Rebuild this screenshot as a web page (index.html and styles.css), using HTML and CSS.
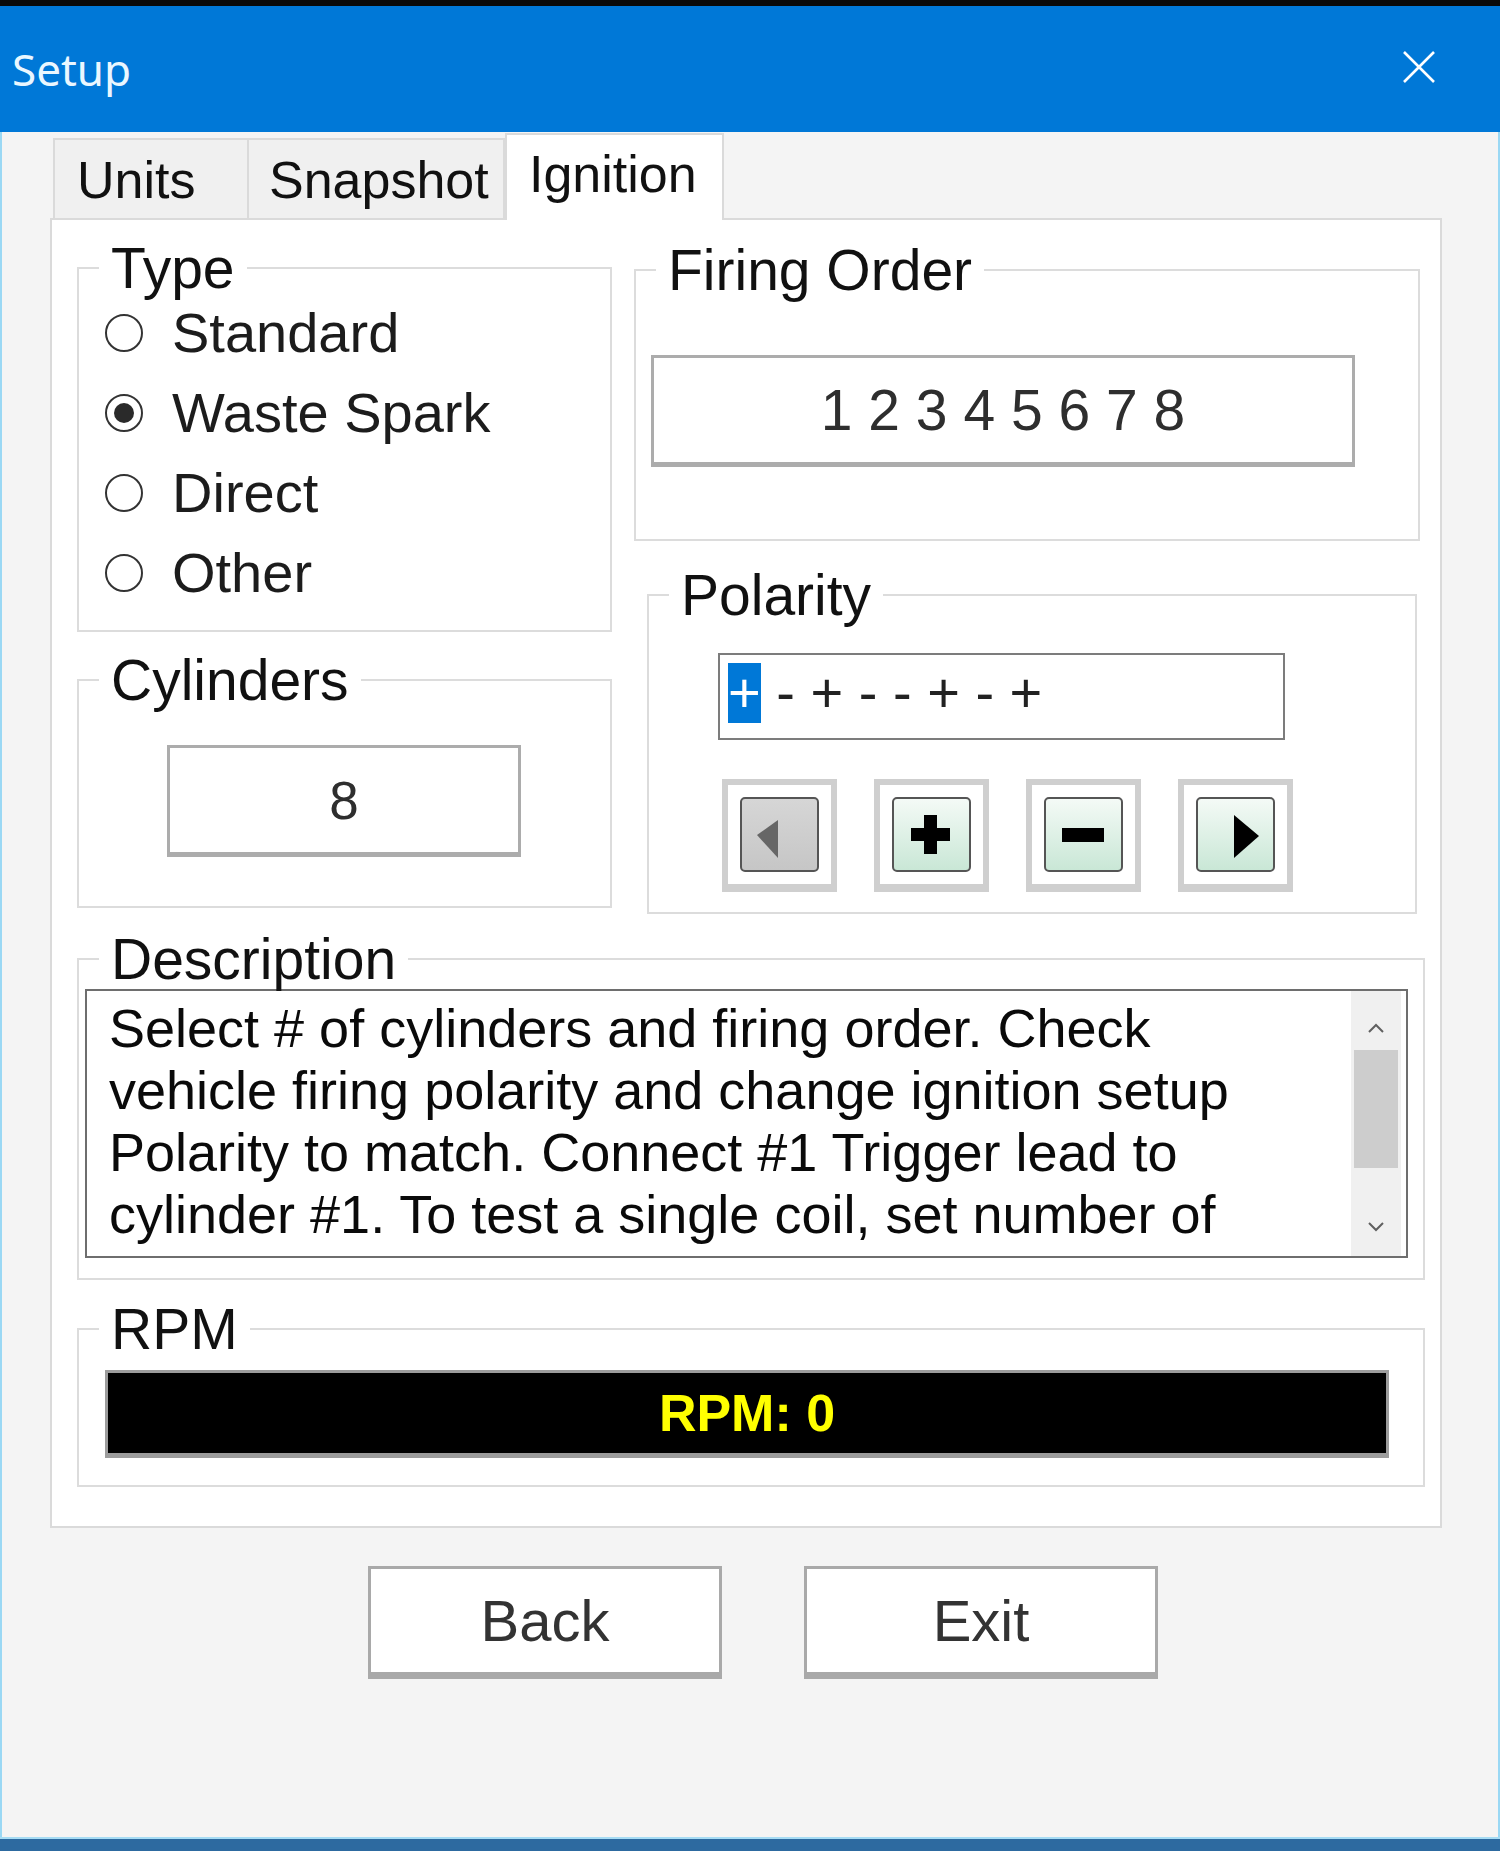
FILE: index.html
```html
<!DOCTYPE html>
<html lang="en">
<head>
    <meta charset="UTF-8">
    <meta name="viewport" content="width=device-width, initial-scale=1.0">
    <title>Setup</title>
    <link rel="stylesheet" href="styles.css">
</head>
<body>
    <div class="window">
        <div class="topstrip"></div>
        <header class="titlebar">
            <span class="title">Setup</span>
            <svg class="close" width="34" height="34" viewBox="0 0 34 34">
                <path d="M2 2 L32 32 M32 2 L2 32" stroke="#ffffff" stroke-width="2.6" fill="none"/>
            </svg>
        </header>

        <div class="body">
            <nav class="tabs">
                <div class="tab tab-units">Units</div>
                <div class="tab tab-snapshot">Snapshot</div>
                <div class="tab tab-ignition active">Ignition</div>
            </nav>

            <div class="panel">
                <div class="upper">
                    <div class="col-left">
                        <fieldset class="group type-group">
                            <legend>Type</legend>
                            <div class="radios">
                                <label class="radio"><span class="circle"></span>Standard</label>
                                <label class="radio checked"><span class="circle"></span>Waste Spark</label>
                                <label class="radio"><span class="circle"></span>Direct</label>
                                <label class="radio"><span class="circle"></span>Other</label>
                            </div>
                        </fieldset>
                        <fieldset class="group cyl-group">
                            <legend>Cylinders</legend>
                            <div class="field cyl-field">8</div>
                        </fieldset>
                    </div>

                    <div class="col-right">
                        <fieldset class="group firing-group">
                            <legend>Firing Order</legend>
                            <div class="field firing-field">1 2 3 4 5 6 7 8</div>
                        </fieldset>
                        <fieldset class="group polarity-group">
                            <legend>Polarity</legend>
                            <div class="polarity-input"><span class="sel">+</span> - + - - + - +</div>
                            <div class="pol-buttons">
                                <div class="pbtn">
                                    <div class="pbtn-face disabled">
                                        <svg width="74" height="71" viewBox="0 0 74 71">
                                            <polygon points="15,36 36,21 36,59" fill="#666666"/>
                                        </svg>
                                    </div>
                                </div>
                                <div class="pbtn">
                                    <div class="pbtn-face">
                                        <svg width="74" height="71" viewBox="0 0 74 71">
                                            <path d="M30 16 H43 V29 H56 V42 H43 V55 H30 V42 H17 V29 H30 Z" fill="#000000"/>
                                        </svg>
                                    </div>
                                </div>
                                <div class="pbtn">
                                    <div class="pbtn-face">
                                        <svg width="74" height="71" viewBox="0 0 74 71">
                                            <rect x="16" y="29" width="42" height="14" fill="#000000"/>
                                        </svg>
                                    </div>
                                </div>
                                <div class="pbtn">
                                    <div class="pbtn-face">
                                        <svg width="74" height="71" viewBox="0 0 74 71">
                                            <polygon points="36,16 61,37 36,59" fill="#000000"/>
                                        </svg>
                                    </div>
                                </div>
                            </div>
                        </fieldset>
                    </div>
                </div>

                <fieldset class="group desc-group">
                    <legend>Description</legend>
                    <div class="desc-box">
                        <p class="desc-text">Select # of cylinders and firing order. Check vehicle firing polarity and change ignition setup Polarity to match. Connect #1 Trigger lead to cylinder #1. To test a single coil, set number of</p>
                        <div class="scrollbar">
                            <div class="sb-up">
                                <svg width="18" height="10" viewBox="0 0 18 10">
                                    <polyline points="2,9 9,2 16,9" fill="none" stroke="#606060" stroke-width="2"/>
                                </svg>
                            </div>
                            <div class="sb-thumb"></div>
                            <div class="sb-track"></div>
                            <div class="sb-down">
                                <svg width="18" height="10" viewBox="0 0 18 10">
                                    <polyline points="2,1 9,8 16,1" fill="none" stroke="#606060" stroke-width="2"/>
                                </svg>
                            </div>
                        </div>
                    </div>
                </fieldset>

                <fieldset class="group rpm-group">
                    <legend>RPM</legend>
                    <div class="rpm-bar">RPM: 0</div>
                </fieldset>
            </div>

            <div class="actions">
                <button class="btn">Back</button>
                <button class="btn">Exit</button>
            </div>
        </div>

        <div class="taskbar"></div>
    </div>
</body>
</html>
```

FILE: styles.css
```css
body {
    margin: 0;
    font-family: "Liberation Sans", Arial, sans-serif;
    color: #111;
}

.window {
    width: 1500px;
    height: 1851px;
    display: flex;
    flex-direction: column;
    background-color: #f4f4f4;
}

.topstrip {
    height: 6px;
    background-color: #0a0a0a;
}

.titlebar {
    height: 126px;
    background-color: #0078d7;
    display: flex;
    align-items: center;
    justify-content: space-between;
    padding: 0 64px 0 12px;
}

.title {
    font-family: "Noto Sans", "Open Sans", sans-serif;
    font-size: 44px;
    color: #eaf7ff;
}

.close {
    margin-top: -4px;
}

.body {
    flex: 1;
    border-left: 2px solid #9ad8f4;
    border-right: 2px solid #9ad8f4;
}

/* tabs */
.tabs {
    height: 86px;
    display: flex;
    align-items: flex-end;
    margin-left: 51px;
}

.tab {
    box-sizing: border-box;
    height: 80px;
    font-size: 52px;
    line-height: 60px;
    padding-top: 10px;
    background-color: #f0f0f0;
    border: 2px solid #dadada;
    border-bottom: 0;
}

.tab-units {
    width: 196px;
    padding-left: 22px;
}

.tab-snapshot {
    width: 256px;
    padding-left: 20px;
    border-left: 0;
}

.tab-ignition {
    width: 219px;
    padding-left: 22px;
}

.tab.active {
    height: 87px;
    padding-top: 9px;
    margin-bottom: -2px;
    background-color: #fff;
    position: relative;
    z-index: 1;
}

/* panel */
.panel {
    box-sizing: border-box;
    width: 1392px;
    height: 1310px;
    margin-left: 48px;
    padding: 16px 15px 0 25px;
    background-color: #fff;
    border: 2px solid #dadada;
}

.upper {
    display: grid;
    grid-template-columns: 535px 786px;
    column-gap: 22px;
}

.col-left {
    display: flex;
    flex-direction: column;
    gap: 16px;
}

.group {
    box-sizing: border-box;
    margin: 0;
    padding: 0;
    min-width: 0;
    border: 2px solid #dcdcdc;
}

.group legend {
    font-size: 57px;
    line-height: 64px;
    padding: 0 12px;
    margin-left: 20px;
    color: #111;
}

/* type */
.type-group {
    height: 396px;
}

.radios {
    display: flex;
    flex-direction: column;
    gap: 14px;
    padding-left: 26px;
}

.radio {
    height: 66px;
    display: flex;
    align-items: center;
    font-size: 56px;
    line-height: 66px;
    color: #1c1c1c;
}

.circle {
    box-sizing: border-box;
    width: 38px;
    height: 38px;
    margin-right: 29px;
    border: 2px solid #333;
    border-radius: 50%;
    background-color: #fff;
    display: flex;
    align-items: center;
    justify-content: center;
}

.radio.checked .circle::after {
    content: "";
    width: 20px;
    height: 20px;
    border-radius: 50%;
    background-color: #2a2a2a;
}

/* inputs */
.field {
    box-sizing: border-box;
    display: flex;
    align-items: center;
    justify-content: center;
    background-color: #fff;
    border: 3px solid #acacac;
    border-bottom-width: 5px;
    color: #2e2e2e;
}

.cyl-group {
    height: 260px;
}

.cyl-field {
    width: 354px;
    height: 112px;
    margin: 33px 0 0 88px;
    font-size: 53px;
}

.col-right {
    display: flex;
    flex-direction: column;
}

.firing-group {
    height: 303px;
    margin-top: 2px;
}

.firing-field {
    width: 704px;
    height: 112px;
    margin: 53px 0 0 15px;
    font-size: 57px;
}

/* polarity */
.polarity-group {
    width: 770px;
    height: 351px;
    margin: 22px 0 0 13px;
}

.polarity-input {
    box-sizing: border-box;
    width: 567px;
    height: 87px;
    margin: 26px 0 0 69px;
    padding: 8px 0 0 8px;
    border: 2px solid #7c7c7c;
    font-size: 56px;
    line-height: 60px;
    white-space: pre;
    color: #222;
}

.sel {
    display: inline-block;
    background-color: #0078d7;
    color: #fff;
}

.pol-buttons {
    display: flex;
    gap: 37px;
    margin: 39px 0 0 73px;
}

.pbtn {
    box-sizing: border-box;
    width: 115px;
    height: 113px;
    padding: 12px;
    background-color: #fff;
    border: 6px solid #cfcfcf;
    border-bottom-width: 8px;
    display: flex;
}

.pbtn-face {
    flex: 1;
    border: 2px solid #555;
    border-radius: 5px;
    background: linear-gradient(#f4faf6, #c9e7d6);
    display: flex;
}

.pbtn-face.disabled {
    background: linear-gradient(#d6d6d6, #c6c6c6);
}

/* description */
.desc-group {
    height: 353px;
    margin-top: 13px;
}

.desc-box {
    box-sizing: border-box;
    height: 269px;
    margin: -2px 15px 0 6px;
    border: 2px solid #6e6e6e;
    display: flex;
    justify-content: space-between;
    background-color: #fff;
}

.desc-text {
    width: 1190px;
    margin: 0;
    padding: 6px 0 0 22px;
    font-size: 54px;
    line-height: 62px;
    color: #0a0a0a;
}

.scrollbar {
    width: 50px;
    margin-right: 5px;
    display: flex;
    flex-direction: column;
    background-color: #f0f0f0;
}

.sb-up {
    height: 59px;
    box-sizing: border-box;
    padding-top: 14px;
    display: flex;
    align-items: center;
    justify-content: center;
}

.sb-thumb {
    height: 118px;
    margin: 0 3px;
    background-color: #cdcdcd;
}

.sb-track {
    flex: 1;
}

.sb-down {
    height: 58px;
    display: flex;
    align-items: center;
    justify-content: center;
}

/* rpm */
.rpm-group {
    height: 190px;
    margin-top: 17px;
}

.rpm-bar {
    box-sizing: border-box;
    width: 1284px;
    height: 88px;
    margin: 9px 0 0 26px;
    background-color: #000;
    border: 3px solid #9c9c9c;
    border-bottom-width: 5px;
    display: flex;
    align-items: center;
    justify-content: center;
    font-size: 52px;
    font-weight: bold;
    color: #ffff00;
}

/* bottom buttons */
.actions {
    display: flex;
    gap: 82px;
    margin-top: 38px;
    padding-left: 366px;
}

.btn {
    box-sizing: border-box;
    width: 354px;
    height: 113px;
    font-family: "Liberation Sans", Arial, sans-serif;
    font-size: 58px;
    color: #333;
    background-color: #fff;
    border: 3px solid #a9a9a9;
    border-bottom-width: 7px;
    cursor: pointer;
}

.taskbar {
    height: 12px;
    background-color: #2d6aa0;
    border-top: 2px solid #a6dcf4;
}
```
